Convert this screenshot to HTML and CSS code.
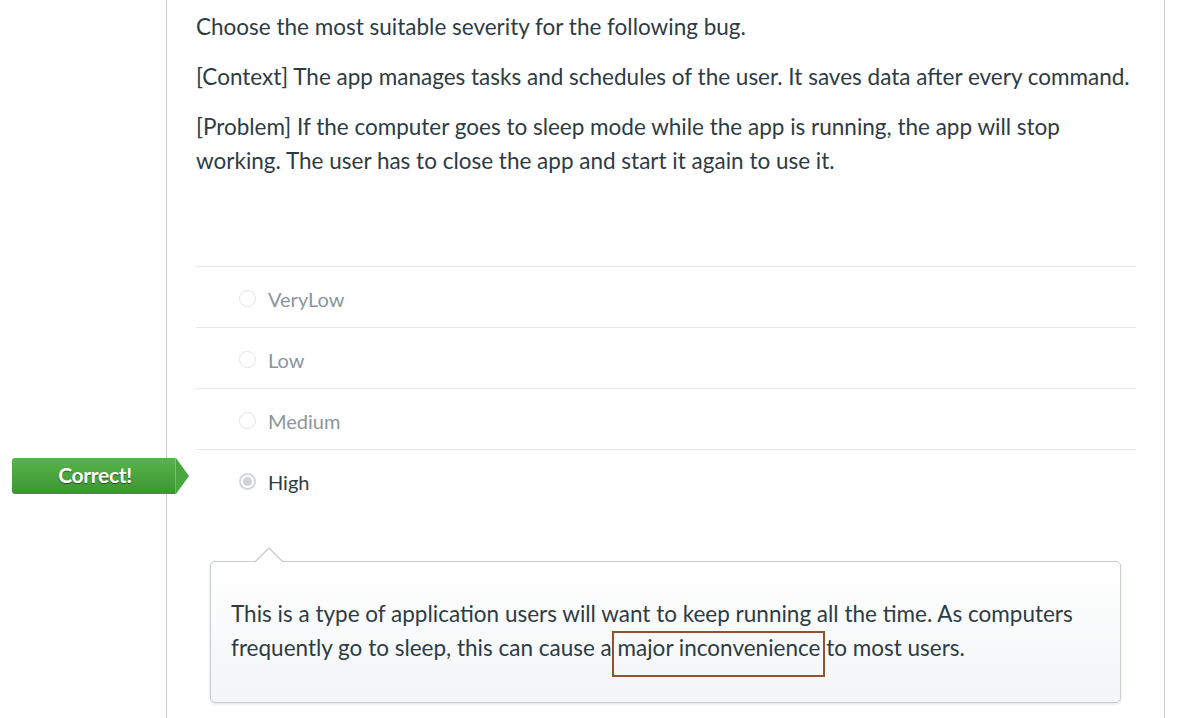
FILE: index.html
```html
<!DOCTYPE html>
<html lang="en">
<head>
<meta charset="utf-8">
<title>Quiz question</title>
<link rel="stylesheet" href="styles.css">
</head>
<body>
<div class="page">
  <div class="gutter"></div>
  <div class="main">
    <div class="question">
      <p>Choose the most suitable severity for the following bug.</p>
      <p>[Context] The app manages tasks and schedules of the user. It saves data after every command.</p>
      <p>[Problem] If the computer goes to sleep mode while the app is running, the app will stop working. The user has to close the app and start it again to use it.</p>
    </div>
    <div class="answers">
      <div class="answer"><span class="radio"></span><span class="label">VeryLow</span></div>
      <div class="answer"><span class="radio"></span><span class="label">Low</span></div>
      <div class="answer"><span class="radio"></span><span class="label">Medium</span></div>
      <div class="answer selected">
        <div class="badge">Correct!</div>
        <span class="radio"></span><span class="label">High</span>
      </div>
    </div>
    <div class="comment">
      <p>This is a type of application users will want to keep running all the time. As computers frequently go to sleep, this can cause a <span class="mark">major inconvenience</span> to most users.</p>
    </div>
  </div>
</div>
</body>
</html>
```

FILE: styles.css
```css
html, body {
  margin: 0;
  padding: 0;
  background: #ffffff;
}
body {
  font-family: Lato, "Open Sans", sans-serif;
  color: #2d3b45;
  font-size: 20px;
}
.page {
  display: flex;
  height: 718px;
  overflow: hidden;
}
.gutter {
  width: 166px;
  flex: none;
}
.main {
  width: 999px;
  flex: none;
  border-left: 1px solid #c7cdd1;
  border-right: 1px solid #c7cdd1;
  padding: 10px 28px 0 29px;
  box-sizing: border-box;
}
.question {
  font-size: 22.5px;
}
.question p {
  margin: 0 0 16px;
  line-height: 34px;
}
.answers {
  margin-top: 88px;
}
.answer {
  position: relative;
  display: flex;
  align-items: center;
  height: 61px;
  padding-top: 3px;
  box-sizing: border-box;
  border-top: 1px solid #e6e9eb;
  color: #8b969e;
}
.answer.selected {
  color: #2d3b45;
}
.radio {
  width: 17px;
  height: 17px;
  border: 1px solid #e1e4e6;
  border-radius: 50%;
  margin-left: 43px;
  margin-right: 12px;
  box-sizing: border-box;
  background: #fff;
  position: relative;
}
.selected .radio {
  border: 2px solid #d3d7da;
}
.selected .radio::after {
  content: "";
  position: absolute;
  left: 2px;
  top: 2px;
  width: 9px;
  height: 9px;
  border-radius: 50%;
  background: #d0d3d6;
}
.badge {
  position: absolute;
  left: -184px;
  top: 8px;
  width: 164px;
  height: 36px;
  line-height: 34px;
  text-align: center;
  color: #fff;
  font-weight: 700;
  font-size: 21px;
  letter-spacing: -0.3px;
  text-shadow: 0 1px 1px rgba(0,0,0,0.5);
  background: linear-gradient(#56b54a, #3e9433);
  border-radius: 3px 0 0 3px;
  box-shadow: inset -1px 0 0 rgba(255,255,255,0.25);
  box-sizing: border-box;
  padding-left: 2px;
}
.badge::after {
  content: "";
  position: absolute;
  right: -13px;
  top: 0;
  border-top: 18px solid transparent;
  border-bottom: 18px solid transparent;
  border-left: 13px solid #4aa53e;
}
.comment {
  position: relative;
  margin: 51px 14px 0 14px;
  width: 911px;
  box-sizing: border-box;
  border: 1px solid #c7cdd1;
  border-radius: 5px;
  background: linear-gradient(#ffffff, #f3f5f6);
  box-shadow: 0 1px 3px rgba(0,0,0,0.12);
  padding: 35px 20px 37px;
  font-size: 22.5px;
}
.comment::before {
  content: "";
  position: absolute;
  left: 44px;
  top: -15px;
  width: 0;
  height: 0;
  border-left: 14px solid transparent;
  border-right: 14px solid transparent;
  border-bottom: 14px solid #c7cdd1;
}
.comment::after {
  content: "";
  position: absolute;
  left: 45px;
  top: -13px;
  width: 0;
  height: 0;
  border-left: 13px solid transparent;
  border-right: 13px solid transparent;
  border-bottom: 13px solid #ffffff;
}
.comment p {
  margin: 0;
  line-height: 34px;
}
.mark {
  position: relative;
}
.mark::after {
  content: "";
  position: absolute;
  left: -6px;
  right: -5px;
  top: -3px;
  bottom: -16px;
  border: 2px solid #8c5431;
}
```
